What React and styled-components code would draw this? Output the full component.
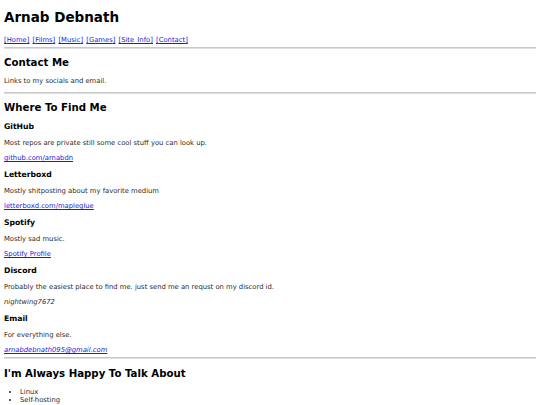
import React from "react";
import styled, { createGlobalStyle } from "styled-components";

const Global = createGlobalStyle`
  body {
    margin: 4px;
    font-family: "DejaVu Sans", Verdana, sans-serif;
    font-size: 6.8px;
    color: #2a2a2a;
    background: #fff;
  }
`;

const sites = [
  {
    name: "GitHub",
    text: "Most repos are private still some cool stuff you can look up.",
    link: "github.com/arnabdn",
  },
  {
    name: "Letterboxd",
    text: "Mostly shitposting about my favorite medium",
    link: "letterboxd.com/mapleglue",
  },
  {
    name: "Spotify",
    text: "Mostly sad music.",
    link: "Spotify Profile",
  },
  {
    name: "Discord",
    text: "Probably the easiest place to find me. just send me an requst on my discord id.",
    id: "nightwing7672",
  },
  {
    name: "Email",
    text: "For everything else.",
    link: "arnabdebnath095@gmail.com",
    italic: true,
  },
];

const pages = ["Home", "Films", "Music", "Games", "Site Info", "Contact"];
const topics = ["Linux", "Self-hosting"];

const App = () => {
  return (
    <Page>
      <Global />
      <Title>Arnab Debnath</Title>
      <Nav>
        {pages.map((n, i) => (
          <React.Fragment key={n}>
            {i > 0 && " "}
            <Anchor href="#">[{n}]</Anchor>
          </React.Fragment>
        ))}
      </Nav>
      <Rule />
      <Heading>Contact Me</Heading>
      <Text>Links to my socials and email.</Text>
      <Rule />
      <Heading>Where To Find Me</Heading>
      <Sites>
        {sites.map((s) => (
          <Site key={s.name}>
            <Sub>{s.name}</Sub>
            <Text>{s.text}</Text>
            {s.link && (
              <Text>
                <Anchor href="#" $italic={s.italic}>{s.link}</Anchor>
              </Text>
            )}
            {s.id && (
              <Text>
                <em>{s.id}</em>
              </Text>
            )}
          </Site>
        ))}
      </Sites>
      <Rule />
      <Heading $top={9}>I'm Always Happy To Talk About</Heading>
      <List>
        {topics.map((t) => (
          <li key={t}>{t}</li>
        ))}
      </List>
    </Page>
  );
};

const Page = styled.div``;

const Title = styled.h1`
  font-size: 13.5px;
  line-height: 16px;
  margin: 5px 0 11px;
  color: #000;
`;

const Nav = styled.nav`
  line-height: 8px;
  margin-bottom: 2px;
  word-spacing: 1px;
`;

const Anchor = styled.a`
  color: #1a1ae0;
  font-style: ${(p) => (p.$italic ? "italic" : "normal")};
`;

const Rule = styled.hr`
  border: none;
  border-top: 1px solid #c8c8c8;
  border-bottom: 1px solid #e0e0e0;
  margin: 3px 0 7px;
`;

const Heading = styled.h2`
  font-size: 10.2px;
  line-height: 12px;
  color: #000;
  margin: ${(p) => p.$top || 8}px 0 8px;
`;

const Sites = styled.div`
  & > section:last-child > p:last-child {
    margin-bottom: 0;
  }
`;

const Site = styled.section``;

const Sub = styled.h3`
  font-size: 7.7px;
  line-height: 10px;
  color: #000;
  margin: 8px 0 7px;
`;

const Text = styled.p`
  line-height: 8px;
  margin: 7px 0;
`;

const List = styled.ul`
  margin: 7px 0;
  padding-left: 16px;
  li {
    line-height: 8px;
  }
`;

export default App;
